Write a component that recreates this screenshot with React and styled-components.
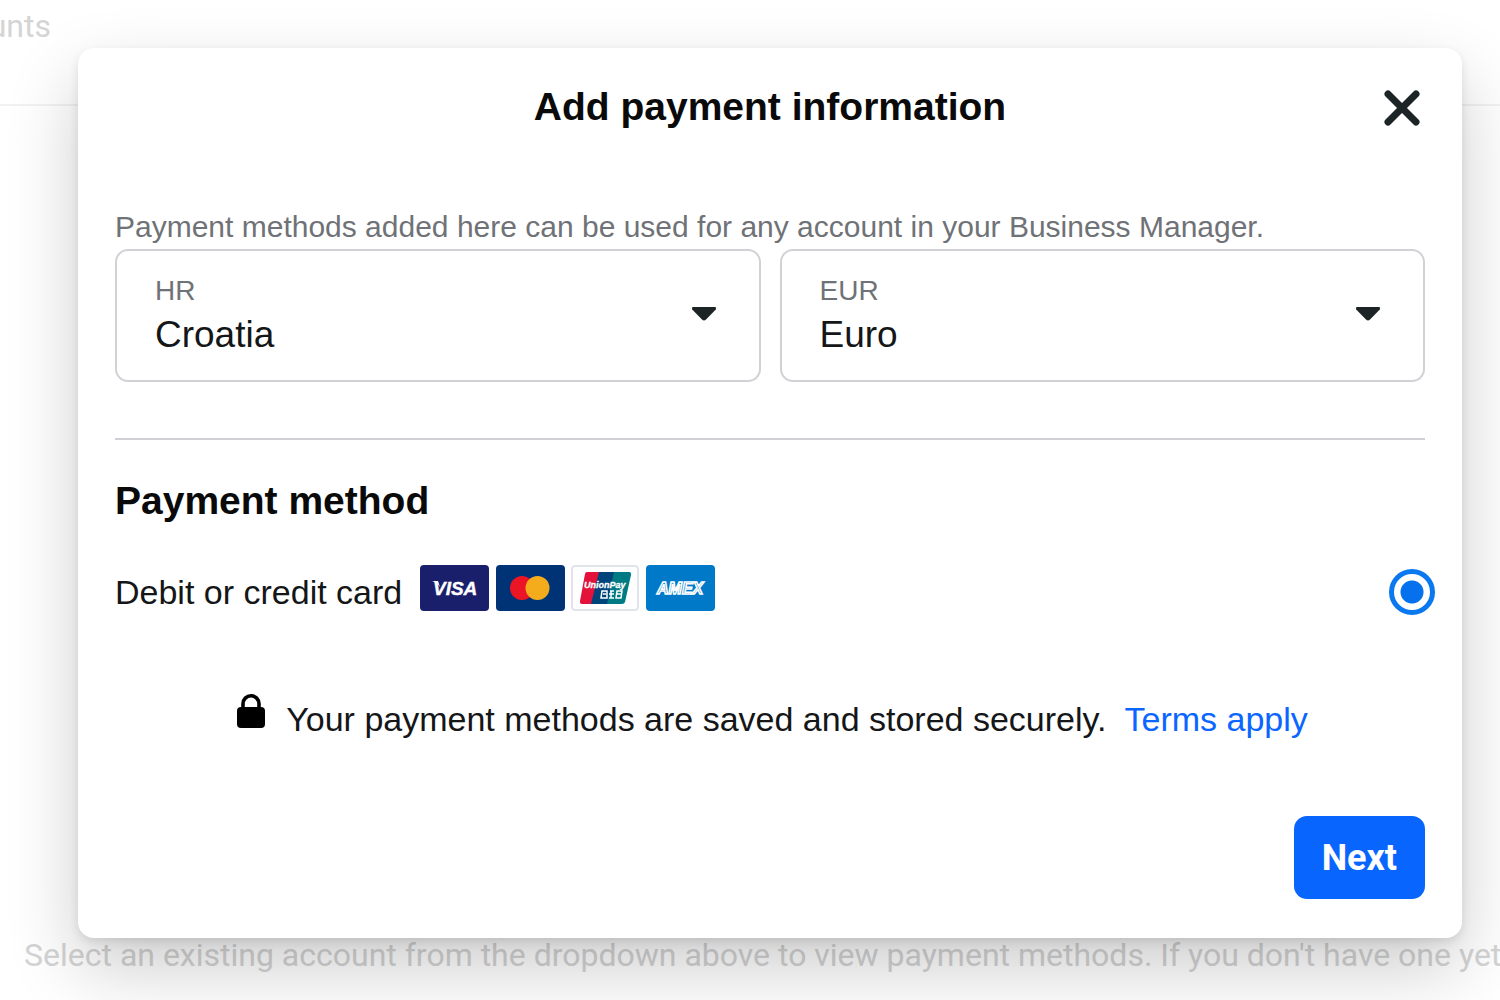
import React, { useState } from 'react';
import styled, { createGlobalStyle } from 'styled-components';

const GlobalStyle = createGlobalStyle`
* {
    box-sizing: border-box;
}
body {
    margin: 0;
    background: #fff;
    font-family: "Liberation Sans", Arial, sans-serif;
    color: #141618;
}
`

const Page = styled.div`
position: relative;
display: flex;
flex-direction: column;
min-height: 100vh;
overflow: hidden;
`

const Backdrop = styled.div`
display: flex;
flex: 1;
flex-direction: column;
justify-content: space-between;
font-family: Roboto, sans-serif;
font-size: 32px;
line-height: 36px;
white-space: nowrap;
color: #d4d4d4;
`

const TopBar = styled.div`
display: flex;
height: 106px;
padding-top: 8px;
border-bottom: 2px solid #f2f2f2;
`

const Crumb = styled.div`
display: flex;
justify-content: flex-end;
width: 51px;
`

const Hint = styled.div`
padding: 0 0 27px 24px;
`

const Overlay = styled.div`
position: absolute;
inset: 0;
padding: 48px 38px 62px 78px;
`

const Dialog = styled.div`
padding-bottom: 39px;
border-radius: 16px;
background: #fff;
box-shadow: 0 30px 72px rgba(0, 0, 0, 0.2), 0 4px 10px rgba(0, 0, 0, 0.1);
`

const Header = styled.div`
display: grid;
grid-template-columns: 1fr auto 1fr;
align-items: center;
height: 118px;
padding: 0 37px;
`

const Title = styled.h1`
grid-column: 2;
margin: 0;
font-size: 39px;
line-height: 46px;
color: #0a0a0a;
`

const CloseButton = styled.button`
display: flex;
justify-self: end;
padding: 6px 5px 4px;
border: 0;
background: transparent;
cursor: pointer;
`

const Body = styled.div`
padding: 43px 37px 0;
`

const Description = styled.p`
margin: 0 0 4px;
font-size: 30px;
line-height: 36px;
white-space: nowrap;
color: #6f7276;
`

const Fields = styled.div`
display: grid;
grid-template-columns: 1fr 1fr;
gap: 19px;
padding-bottom: 56px;
border-bottom: 2px solid #ced0d4;
`

const Field = styled.div`
display: flex;
align-items: center;
height: 133px;
padding: 0 43px 0 38px;
border: 2px solid #d0d2d6;
border-radius: 13px;
`

const FieldText = styled.div`
display: flex;
flex: 1;
flex-direction: column;
`

const FieldLabel = styled.label`
font-size: 28px;
line-height: 38px;
color: #6f7276;
`

const Select = styled.select`
appearance: none;
height: 50px;
padding: 0;
border: 0;
background: transparent;
font-family: inherit;
font-size: 37px;
line-height: 50px;
color: #141618;
cursor: pointer;
`

const SectionTitle = styled.h2`
margin: 38px 0 41px;
font-size: 39px;
line-height: 46px;
color: #0a0a0a;
`

const Method = styled.div`
display: flex;
align-items: center;
height: 54px;
`

const MethodLabel = styled.label`
font-size: 34px;
line-height: 46px;
`

const Cards = styled.div`
display: flex;
flex: 1;
align-self: flex-start;
gap: 6px;
padding-left: 18px;
`

const Radio = styled.input`
appearance: none;
flex: none;
width: 46px;
height: 46px;
margin: 0 -10px 0 0;
border: 5px solid #0a78ef;
border-radius: 50%;
background: radial-gradient(circle, #0571ed 11px, #fff 12px);
`

const Notice = styled.div`
display: flex;
justify-content: center;
margin: 75px 0 72px;
padding-left: 4px;
font-size: 34px;
line-height: 50px;
white-space: nowrap;
`

const NoticeText = styled.span`
margin: 0 18px 0 20px;
`

const TermsLink = styled.a`
color: #0a66ff;
text-decoration: none;
`

const Footer = styled.div`
display: flex;
justify-content: flex-end;
`

const NextButton = styled.button`
height: 83px;
padding: 0 28px;
border: 0;
border-radius: 13px;
background: #0866ff;
font-family: Roboto, sans-serif;
font-size: 36px;
font-weight: bold;
color: #fff;
cursor: pointer;
`

const Caret = () => (
    <svg width="24" height="18" viewBox="0 0 24 18" aria-hidden="true">
        <path d="M1 0h22q1.400 0 .8 2.400L14 12.600q-2 2-4 0L.2 2.400Q-.4 0 1 0z" fill="#1c2425" />
    </svg>
)

const CloseIcon = () => (
    <svg width="36" height="36" viewBox="0 0 36 36" aria-hidden="true">
        <path d="M4 4l28 28M32 4L4 32" stroke="#1c2425" strokeWidth="7" strokeLinecap="round" />
    </svg>
)

const LockIcon = () => (
    <svg width="30" height="36" viewBox="0 0 30 36" aria-hidden="true">
        <path d="M7 16V9.800a8 8 0 0 1 16 0V16" fill="none" stroke="#000" strokeWidth="3.600" />
        <rect x="1" y="13" width="28" height="21" rx="4" fill="#000" />
    </svg>
)

const cardText = {
    fontFamily: 'Liberation Sans, Arial, sans-serif',
    fontWeight: 'bold',
    fontStyle: 'italic',
}

const VisaCard = () => (
    <svg width="70" height="46" viewBox="0 0 70 46" role="img" aria-label="Visa">
        <rect width="69" height="46" rx="4" fill="#1a1f6c" />
        <path d="M12 16h6l2 6-3-4z" fill="#fff" />
        <text x="13" y="30" fontSize="19" fill="#fff" stroke="#fff" strokeWidth=".4" {...cardText}>VISA</text>
    </svg>
)

const MastercardCard = () => (
    <svg width="69" height="46" viewBox="0 0 69 46" role="img" aria-label="Mastercard">
        <rect width="69" height="46" rx="4" fill="#003375" />
        <circle cx="26" cy="23" r="12" fill="#eb1526" />
        <circle cx="41.500" cy="23" r="12" fill="#f4ac1c" />
    </svg>
)

const UnionPayCard = () => (
    <svg width="69" height="46" viewBox="0 0 69 46" role="img" aria-label="UnionPay">
        <rect x="1" y="1" width="66" height="44" rx="3" fill="#fff" stroke="#e1e4ea" strokeWidth="2" />
        <path d="M16 7h14l-7 32H11q-2.500 0-2-3l5-27q.5-2 2-2z" fill="#e2123a" />
        <path d="M28 7h18l-7 32H20z" fill="#00447c" />
        <path d="M43 7h15q2.500 0 2 3l-6 27q-.5 2-3 2H36z" fill="#007b84" />
        <text x="13" y="23" fontSize="9" fill="#fff" stroke="#fff" strokeWidth=".3" {...cardText}>UnionPay</text>
        <path d="M31 26h5v7h-6zM32 29h3M39 26h4M38 29h5M38 33h5M40 26v7M46 26h5l-1 7h-5zM46 29h4" fill="none" stroke="#fff" strokeWidth="1.500" />
    </svg>
)

const AmexCard = () => (
    <svg width="70" height="46" viewBox="0 0 70 46" role="img" aria-label="Amex">
        <rect width="69" height="46" rx="4" fill="#0079c9" />
        <text x="11" y="29" fontSize="16" fill="#0079c9" stroke="#fff" strokeWidth="1.500" {...cardText}>AMEX</text>
    </svg>
)

const SelectField = ({ id, label, options }) => (
    <Field>
        <FieldText>
            <FieldLabel htmlFor={id}>{label}</FieldLabel>
            <Select id={id}>
                {options.map(option => <option key={option}>{option}</option>)}
            </Select>
        </FieldText>
        <Caret />
    </Field>
)

const App = () => {
    const [method, setMethod] = useState('card');

    return (
        <Page>
            <GlobalStyle />
            <Backdrop>
                <TopBar>
                    <Crumb>unts</Crumb>
                </TopBar>
                <Hint>
                    Select an existing account from the dropdown above to view payment methods. If you don't have one yet
                </Hint>
            </Backdrop>
            <Overlay>
                <Dialog role="dialog" aria-labelledby="title">
                    <Header>
                        <Title id="title">Add payment information</Title>
                        <CloseButton type="button" aria-label="Close">
                            <CloseIcon />
                        </CloseButton>
                    </Header>
                    <Body>
                        <Description>
                            Payment methods added here can be used for any account in your Business Manager.
                        </Description>
                        <Fields>
                            <SelectField id="country" label="HR" options={['Croatia']} />
                            <SelectField id="currency" label="EUR" options={['Euro']} />
                        </Fields>
                        <SectionTitle>Payment method</SectionTitle>
                        <Method>
                            <MethodLabel htmlFor="card">Debit or credit card</MethodLabel>
                            <Cards>
                                <VisaCard />
                                <MastercardCard />
                                <UnionPayCard />
                                <AmexCard />
                            </Cards>
                            <Radio
                                id="card"
                                type="radio"
                                name="method"
                                checked={method === 'card'}
                                onChange={() => setMethod('card')}
                            />
                        </Method>
                        <Notice>
                            <LockIcon />
                            <NoticeText>Your payment methods are saved and stored securely.</NoticeText>
                            <TermsLink href="#terms">Terms apply</TermsLink>
                        </Notice>
                        <Footer>
                            <NextButton type="button">Next</NextButton>
                        </Footer>
                    </Body>
                </Dialog>
            </Overlay>
        </Page>
    )
}

export default App;
